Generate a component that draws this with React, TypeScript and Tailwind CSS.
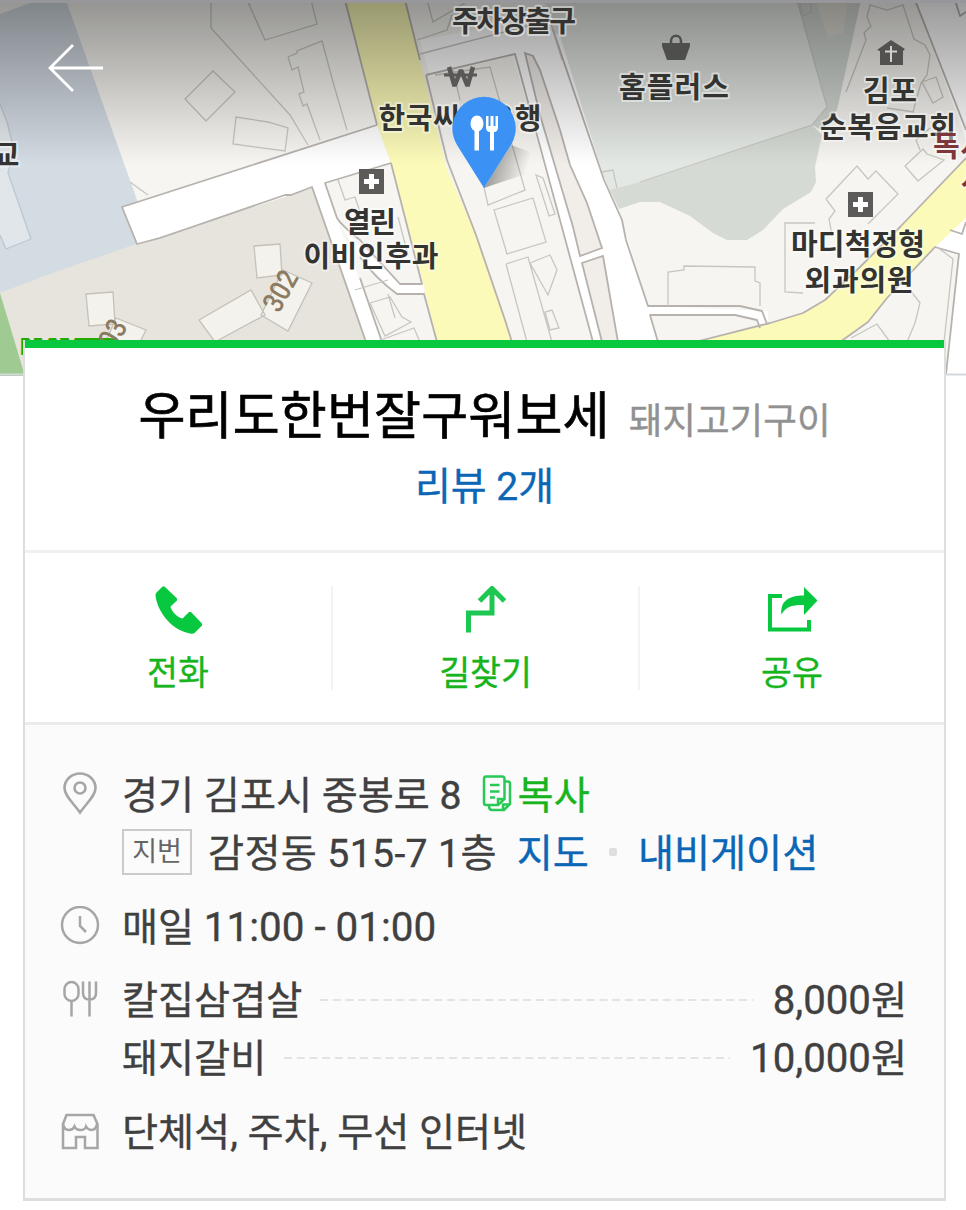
import type { ReactNode } from "react";

type LabelProps = { x: number; y: number; width: number; children: string; fill?: string };

// Map label with a light halo, centred on x
function MapLabel({ x, y, width, children, fill = "#333331" }: LabelProps) {
  return (
    <text
      x={x}
      y={y}
      textLength={width}
      textAnchor="middle"
      fill={fill}
      className="text-[29px] font-bold [paint-order:stroke]"
      stroke="#fff"
      strokeOpacity="0.45"
      strokeWidth="4"
      strokeLinejoin="round"
    >
      {children}
    </text>
  );
}

function Hospital({ x, y }: { x: number; y: number }) {
  return (
    <g transform={`translate(${x} ${y})`}>
      <rect width="25" height="25" fill="#5c5b5a" />
      <path d="M10 5h5v5h5v5h-5v5h-5v-5H5v-5h5z" fill="#fff" />
    </g>
  );
}

function MapView() {
  return (
    <svg width="966" height="376" viewBox="0 0 966 376" className="block">
      <defs>
        <linearGradient id="shade" x1="0" y1="0" x2="0" y2="1">
          <stop offset="0" stopColor="#000" stopOpacity="0.4" />
          <stop offset="0.35" stopColor="#000" stopOpacity="0.26" />
          <stop offset="1" stopColor="#000" stopOpacity="0" />
        </linearGradient>
        <linearGradient id="pinShadow" gradientUnits="userSpaceOnUse" x1="492" y1="165" x2="526" y2="174">
          <stop offset="0" stopColor="#000" stopOpacity="0.35" />
          <stop offset="1" stopColor="#000" stopOpacity="0" />
        </linearGradient>
      </defs>
      <rect width="966" height="376" fill="#f6f5f1" />

      {/* ground areas */}
      <path d="M0 14 30 3H67L137 200V244L0 293Z" fill="#d3dbe3" />
      <path d="M0 293 55 272 137 244 312 187 366 342V376H0Z" fill="#e6e4dc" />
      <path d="M0 293 25 376H0Z" fill="#9fcb92" />
      <path d="M545 0H797L827 107 812 125 640 182 602 196Z" fill="#e4e8e4" />
      <path d="M610 190 640 182 812 125 822 135 815 167 816 182 811 192 783 209 763 230 747 240H727L713 233 690 216 660 202H640L619 209Z" fill="#d5dbd4" />
      <path d="M797 0H861L837 110 822 130 812 125 827 107Z" fill="#d0d5d0" />
      <path d="M815 0H848L843 33 828 37Z" fill="#dedbd2" />

      {/* white roads */}
      <g fill="#fff">
        <path d="M122 207 377 125 391 163 137 244Z" />
        <path d="M312 187 325 183 337 218 382 342H366Z" />
        <path d="M337 218 352 238 400 284H424V294H397L356 253Z" />
        <path d="M420 40 500 25 536 22 560 36 602 172 622 220 648 306 768 311 768 324 760 328 757 320 735 315H650L657 342H593L513 55 430 77Z" />
        <path d="M915 0H966V140Z" />
        <path d="M935 247 966 215V376H946L959 254Z" />
      </g>
      <path d="M525 53 533 56 540 70 560 130 570 165 587 203 602 248 580 256 573 227 540 115Z" fill="#f1eeea" stroke="#b7b1ad" strokeWidth="1.8" />
      <path d="M582 263 603 256 618 342H602Z" fill="#f1eeea" stroke="#b7b1ad" strokeWidth="1.8" />
      <path d="M650 315H735L757 320 760 328 705 342H658Z" fill="#f6f5f1" />

      {/* yellow roads */}
      <path d="M345 0H405L447 170 476 235 512 342H437L424 285 391 163 377 125Z" fill="#fbfab8" />
      <path d="M966 158 900 227 860 267 825 300 803 313 770 323 695 342H840L868 322 887 298 935 247 966 218Z" fill="#fbfab8" />

      {/* road edges */}
      <g fill="none" stroke="#b7b2ad" strokeWidth="1.8" strokeLinejoin="round">
        <path d="M377 125 122 207 137 244 160 238 285 195H291L312 187 366 342" />
        <path d="M345 0 377 125M382 342 360 278M391 163 325 183 337 218Q342 226 360 240L400 284H422L391 163M360 257Q375 278 397 294H424L437 342" />
        <path d="M405 0 420 60M426 75 447 160 476 235 505 320 512 342M426 75 515 54 593 342" />
        <path d="M553 30 604 180 622 220 626 240 648 306H740L762 311 767 324 803 313 825 300 860 267 900 227 966 158" />
        <path d="M658 342 650 315H735L757 320 760 328M915 0 966 130" />
        <path d="M840 342 868 322 887 298 935 247 959 254 946 374M950 230 962 234 966 222" />
        <path d="M955 0 960 16 966 12M695 342 770 323" />
      </g>

      {/* building footprints and lot lines */}
      <g fill="none" stroke="#c7c7c1" strokeWidth="1.3">
        <path d="M211 0V28L290 115 308 145M247 0 265 40 317 24 311 0M288 57 297 53V51L322 41 333 82 347 130M288 57 292 70 298 67 304 92 299 94 303 106 307 104 320 140M213 71 235 92 206 121 185 99ZM236 117 268 122 288 128 285 151 233 144ZM130 182 148 195" />
        <path d="M417 40 447 30 452 15M427 0 433 22 470 0M420 54 550 20 562 60M453 70 460 100M435 75 490 67 525 190 488 205 480 170M494 210 533 198 546 242 507 254ZM506 264 528 257 552 342M506 264 527 342M530 263 550 255 557 270 548 295ZM545 312 552 310 559 328 550 330ZM536 175 543 178 555 214 549 216Z" />
        <path d="M338 180 345 200 355 197 362 218 355 222M398 217 408 255M355 290 388 280M370 303 390 297 402 317 411 322 385 336ZM388 294 395 318M375 342 414 328 420 342" />
        <path d="M797 0 827 107 812 125 640 182M602 172 613 170 617 188M800 0 802 16 811 12V0" />
        <path d="M668 306V272L684 270V266L755 267V281L760 283V306M815 223H785V292L803 293M826 199 857 166 868 179 876 171 898 194 868 224M826 199 835 211 829 219 832 235" />
        <path d="M905 166 923 149 927 154 944 160 918 181ZM920 150 916 140 930 128M846 92 866 40 864 33 871 26 867 17 870 5 887 10 903 5 914 39 925 45 930 55 927 75 921 83 913 112M922 82 936 77 943 97 933 103ZM887 108 914 112M937 247 953 259 944 342M910 290 920 303 915 323 907 342M851 338 877 324 890 342" />
      </g>
      <g fill="#f3f2ec" stroke="#c5c1b7" strokeWidth="1.3">
        <path d="M254 246 280 244 282 275 257 278ZM283 270 312 283 288 331 261 315ZM199 320 251 290 265 315 215 342ZM86 294 113 292 115 324 89 326ZM116 318 146 330 139 344H105Z" />
      </g>
      <path d="M0 104 7 122 14 150 8 173 31 239 6 249 0 235" fill="#e0e6ea" stroke="#bdc7d0" strokeWidth="1.3" />

      <rect width="966" height="165" fill="url(#shade)" />
      <rect width="966" height="3" fill="#96969b" />

      <g fontFamily='Roboto, "Noto Sans CJK KR", sans-serif'>
        <text x="21" y="354" textLength="97" lengthAdjust="spacingAndGlyphs" fill="#25a800" stroke="#25a800" strokeWidth="2" className="text-[21px] font-black">NAVER</text>
        <g fill="#8b7b60" className="text-[29px] font-medium">
          <text transform="translate(279 314) rotate(-61)" textLength="42" lengthAdjust="spacingAndGlyphs">302</text>
          <text transform="translate(108 363) rotate(-61)" textLength="42" lengthAdjust="spacingAndGlyphs">303</text>
        </g>
        <MapLabel x={514} y={32} width={124}>주차장출구</MapLabel>
        <MapLabel x={460} y={129} width={163}>한국씨티은행</MapLabel>
        <MapLabel x={674} y={98} width={110}>홈플러스</MapLabel>
        <MapLabel x={890} y={102} width={54}>김포</MapLabel>
        <MapLabel x={888} y={138} width={136}>순복음교회</MapLabel>
        <MapLabel x={370} y={233} width={52}>열린</MapLabel>
        <MapLabel x={371} y={267} width={135}>이비인후과</MapLabel>
        <MapLabel x={858} y={255} width={134}>마디척정형</MapLabel>
        <MapLabel x={859} y={291} width={109}>외과의원</MapLabel>
        <MapLabel x={6} y={166} width={27}>교</MapLabel>
        <MapLabel x={960} y={157} width={54} fill="#7d373b">독서</MapLabel>
        <MapLabel x={974} y={190} width={27} fill="#7d373b">서</MapLabel>
      </g>

      <Hospital x={359} y={169} />
      <Hospital x={848} y={192} />
      {/* bank */}
      <path d="M449 67 454.500 86 461 70 467.500 86 473 67" fill="none" stroke="#595857" strokeWidth="4.5" strokeLinejoin="bevel" />
      <path d="M444 75H477" stroke="#595857" strokeWidth="3" />
      {/* mart */}
      <path d="M662 43H690V46L685 60H667L662 46Z" fill="#4e4e4d" />
      <path d="M671 44V41C671 34 681 34 681 41V44" fill="none" stroke="#4e4e4d" strokeWidth="2.5" />
      {/* church */}
      <path d="M891 40 905 49 903 51V65H880V51L877 50Z" fill="#525150" />
      <path d="M891 46V62M885 51.500H897" stroke="#d0d0ce" strokeWidth="2" />

      {/* selected place */}
      <path d="M484 188 511 145 531 152 526 174Z" fill="url(#pinShadow)" />
      <path d="M484 188 457 145A31.700 31.700 0 1 1 511 145Z" fill="#3b92f4" />
      <g fill="#fff">
        <ellipse cx="477" cy="123.500" rx="6.500" ry="8" />
        <rect x="474.500" y="129" width="4.500" height="21.500" />
        <path d="M486 116H488.500V126H490.500V116H493.500V126H495.500V116H498V127Q498 132 494 132V150.500H490V132Q486 132 486 127Z" />
      </g>

      <path d="M103 68H50M73 45 50 68 73 91" fill="none" stroke="#fff" strokeWidth="2.8" />
      <path d="M0 374.500H24M946 374.500H966" stroke="#d5d8dc" strokeWidth="2" />
    </svg>
  );
}

function PhoneIcon() {
  return (
    <svg width="52" height="52" viewBox="0 0 52 52" className="shrink-0">
      <path d="M10.500 0.500 12.500 0.500 25 12.500 25 14.500 18.500 20.500C19 25 26 32 30.500 32.500L37 26 39 26 50 37.500 50 39.500 42.500 47C41 48.500 38 47.500 36 47C18 43 5 24 3.500 9.500C3.500 8 4 7 5 6Z" fill="#07c83f" />
    </svg>
  );
}

function RouteIcon() {
  return (
    <svg width="52" height="52" viewBox="0 0 52 52" className="shrink-0" fill="none" stroke="#1dc751" strokeWidth="5">
      <path d="M8.500 46.500V27H32V3M19.500 15 32 2.500 44.500 15" />
    </svg>
  );
}

function ShareIcon() {
  return (
    <svg width="52" height="52" viewBox="0 0 52 52" className="shrink-0">
      <path d="M16 10H4V43.500H43V34" fill="none" stroke="#07c83f" strokeWidth="4" />
      <path d="M38 1 51.500 14.500 38 29V19C27 19 20 20 15.500 28.500C14 15 23 9.500 38 9.500Z" fill="#07c83f" />
    </svg>
  );
}

function PinIcon() {
  return (
    <svg width="40" height="44" viewBox="0 0 40 44" fill="none" stroke="#a6a6a6" strokeWidth="2.6">
      <path d="M20 40.500C13 30.500 4.500 24 4.500 16A15.500 14.500 0 0 1 35.500 16C35.500 24 27 30.500 20 40.500Z" />
      <circle cx="20" cy="16" r="5.500" />
    </svg>
  );
}

function ClockIcon() {
  return (
    <svg width="40" height="40" viewBox="0 0 40 40" fill="none" stroke="#a6a6a6" strokeWidth="2.5">
      <circle cx="20" cy="19" r="18" />
      <path d="M20 10V20L26 26" />
    </svg>
  );
}

function MenuIcon() {
  return (
    <svg width="40" height="40" viewBox="0 0 40 40" fill="none" stroke="#a6a6a6" strokeWidth="2.5">
      <rect x="4.500" y="3" width="14" height="19" rx="7" />
      <path d="M11.500 22V37.500M23 2.500V14Q23 20.500 29.500 20.500T36 14V2.500M29.500 2.500V37.500" />
    </svg>
  );
}

function StoreIcon() {
  return (
    <svg width="40" height="40" viewBox="0 0 40 40" fill="none" stroke="#a6a6a6" strokeWidth="2.5">
      <path d="M6.500 4H33.500L37.500 13V37H25V26H16V37H3V13Z" />
      <path d="M3 13Q4 19 9 19Q13 19 14.500 15.500Q16 19 20.500 19T26 15.500Q28 19 31 19Q36 19 37 13" />
    </svg>
  );
}

function CopyIcon() {
  return (
    <svg width="30" height="38" viewBox="0 0 30 38" className="-mt-1 shrink-0" fill="none" stroke="#29c957" strokeWidth="2.5">
      <path d="M4 1.500H20Q22.500 1.500 22.500 4V24L16 30H4Q2 30 2 28V4Q2 1.500 4 1.500ZM16 30V24H22.500M23 6.500H26Q28 6.500 28 9V29L22 35H10Q7 35 7 31M21 35V29.500H28M8 10H17.500M8 16.500H17.500M8 22.500H13" />
    </svg>
  );
}

const actions = [
  { label: "전화", icon: <PhoneIcon /> },
  { label: "길찾기", icon: <RouteIcon /> },
  { label: "공유", icon: <ShareIcon /> },
];

const menu = [
  { name: "칼집삼겹살", price: "8,000" },
  { name: "돼지갈비", price: "10,000" },
];

function InfoRow({ icon, children }: { icon: ReactNode; children: ReactNode }) {
  return (
    <div className="flex">
      <div className="-mt-0.5 flex h-[58px] w-[62px] shrink-0 items-center">{icon}</div>
      <div className="min-w-0 flex-1">{children}</div>
    </div>
  );
}

export default function App() {
  return (
    <main className="h-[1210px] w-[966px] overflow-hidden bg-white font-[Roboto,'Noto_Sans_CJK_KR',sans-serif] [-webkit-text-stroke-width:0.35px]">
      <MapView />

      <section className="relative -mt-9 mr-5 ml-[23px] h-[861px] border-x-2 border-b-3 border-[#dedede] bg-white">
        <div className="h-2 bg-[#07c83f]" />
        <div className="flex h-[205px] flex-col items-center border-b-3 border-[#f0f0f0] pt-[31px]">
          <div className="flex items-baseline gap-[19px] whitespace-nowrap">
            <h1 className="text-[51px] leading-[76px] tracking-[0.2px] text-black [-webkit-text-stroke-width:0.7px]">우리도한번잘구워보세</h1>
            <span className="text-[36.6px] text-[#919191]">돼지고기구이</span>
          </div>
          <a href="#reviews" className="text-[39px] leading-[64px] text-[#0b66b5]">리뷰 2개</a>
        </div>

        <div className="grid h-[172px] grid-cols-[308px_307px_1fr] items-center border-b-3 border-[#ebebeb]">
          {actions.map(({ label, icon }) => (
            <button
              key={label}
              className="flex h-[104px] flex-col items-center border-r-2 border-[#f3f3f3] text-[33.6px] text-[#17b41d] last:border-r-0"
            >
              {icon}
              <span className="leading-[71px]">{label}</span>
            </button>
          ))}
        </div>

        <div className="flex h-[473px] flex-col gap-[15.5px] bg-[#fbfbfb] pt-[42px] pr-[37px] pl-[35px] text-[39.2px] leading-[58px] whitespace-nowrap text-[#404040]">
          <InfoRow icon={<PinIcon />}>
            <div className="flex items-center">
              경기 김포시 중봉로 8
              <button className="ml-5 flex items-center gap-1.5 text-[#17b41d]">
                <CopyIcon />
                복사
              </button>
            </div>
            <div className="flex items-center">
              <span className="mr-4 -mt-1 flex h-[46px] w-[70px] items-center justify-center border-2 border-[#cbcbcb] text-[27px] text-[#666] [-webkit-text-stroke-width:0px]">지번</span>
              <span className="tracking-[0.35px]">감정동 515-7 1층</span>
              <a href="#map" className="ml-5 text-[#0b66b5]">지도</a>
              <span className="mx-[20.5px] -mt-1 size-2 rounded-xs bg-[#dedede]" />
              <a href="#navigation" className="text-[#0b66b5]">내비게이션</a>
            </div>
          </InfoRow>

          <InfoRow icon={<ClockIcon />}>
            매일 <span className="text-[40.4px] leading-none">11:00 - 01:00</span>
          </InfoRow>

          <InfoRow icon={<MenuIcon />}>
            {menu.map(({ name, price }) => (
              <div key={name} className="flex items-center">
                {name}
                <svg className="-mt-0.5 mr-5 ml-[18px] h-0.5 min-w-0 flex-1">
                  <path d="M0 1H700" stroke="#e3e3e3" strokeWidth="2" strokeDasharray="8 4.700" />
                </svg>
                <span className="text-[40.2px] leading-none">{price}</span>원
              </div>
            ))}
          </InfoRow>

          <InfoRow icon={<StoreIcon />}>단체석, 주차, 무선 인터넷</InfoRow>
        </div>
      </section>
    </main>
  );
}
